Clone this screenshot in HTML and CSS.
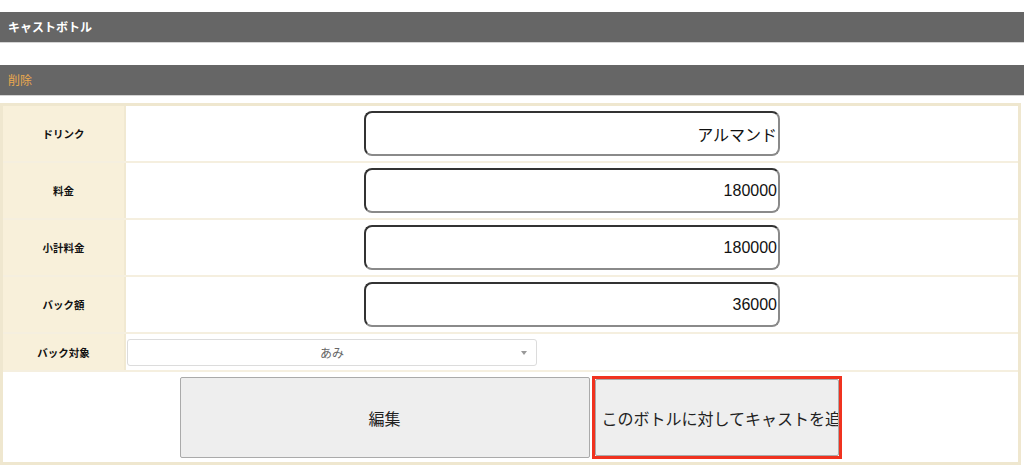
FILE: index.html
```html
<!DOCTYPE html>
<html lang="ja">
<head>
<meta charset="utf-8">
<title>キャストボトル</title>
<link rel="stylesheet" href="styles.css">
</head>
<body>
<div class="bar bar-title">キャストボトル</div>
<div class="bar bar-delete">削除</div>
<div class="form-table">
  <div class="row">
    <div class="label">ドリンク</div>
    <div class="value center"><div class="field">アルマンド</div></div>
  </div>
  <div class="row">
    <div class="label">料金</div>
    <div class="value center"><div class="field">180000</div></div>
  </div>
  <div class="row">
    <div class="label">小計料金</div>
    <div class="value center"><div class="field">180000</div></div>
  </div>
  <div class="row">
    <div class="label">バック額</div>
    <div class="value center"><div class="field">36000</div></div>
  </div>
  <div class="row row-select">
    <div class="label">バック対象</div>
    <div class="value">
      <div class="select"><span class="select-text">あみ</span><span class="caret"></span></div>
    </div>
  </div>
  <div class="row row-buttons">
    <div class="buttons">
      <div class="btn btn-edit">編集</div>
      <div class="highlight"><div class="btn btn-add">このボトルに対してキャストを追加</div></div>
    </div>
  </div>
</div>
</body>
</html>
```

FILE: styles.css
```css
html, body {
  margin: 0;
  padding: 0;
  background: #ffffff;
  font-family: "Liberation Sans", "Noto Sans CJK JP", sans-serif;
}

.bar {
  height: 30px;
  line-height: 30px;
  background: #666666;
  border-bottom: 1px solid #d4d4d4;
  padding-left: 8px;
  font-size: 12px;
  font-family: "Noto Sans CJK JP", sans-serif;
}

.bar-title {
  margin-top: 12px;
  color: #ffffff;
  font-weight: bold;
}

.bar-delete {
  margin-top: 22px;
  color: #eba94e;
}

.form-table {
  margin-top: 7px;
  width: 1015px;
  border: 3px solid #efe7cf;
}

.row {
  display: grid;
  grid-template-columns: 123px 1fr;
  height: 55px;
  border-bottom: 2px solid #f5efdf;
}

.row-select {
  height: 36px;
}

.row-buttons {
  display: block;
  height: 90px;
  border-bottom: none;
}

.label {
  background: #f8f0da;
  border-right: 2px solid #f1e9d2;
  display: flex;
  align-items: center;
  justify-content: center;
  font-family: "Noto Sans CJK JP", sans-serif;
  font-weight: bold;
  font-size: 10.5px;
  color: #111111;
}

.value {
  display: flex;
  align-items: center;
}

.value.center {
  justify-content: center;
}

.field {
  box-sizing: border-box;
  width: 416px;
  height: 45px;
  border: 2px solid;
  border-color: #333333 #8a8a8a #8a8a8a #333333;
  border-radius: 8px;
  display: flex;
  align-items: center;
  justify-content: flex-end;
  padding-right: 1px;
  font-size: 16px;
  color: #111111;
}

.select {
  box-sizing: border-box;
  width: 410px;
  height: 27px;
  margin-left: 1px;
  border: 1px solid #dcdcdc;
  border-radius: 3px;
  display: flex;
  align-items: center;
  justify-content: center;
  position: relative;
  font-family: "Noto Sans CJK JP", sans-serif;
  font-size: 12px;
  color: #666666;
}

.caret {
  position: absolute;
  right: 9px;
  top: 11px;
  width: 0;
  height: 0;
  border-left: 3px solid transparent;
  border-right: 3px solid transparent;
  border-top: 4px solid #999999;
}

.buttons {
  display: flex;
  justify-content: center;
  align-items: flex-start;
  gap: 2px;
  padding-top: 4px;
}

.btn {
  box-sizing: border-box;
  background: #eeeeee;
  border: 1px solid #aaaaaa;
  border-radius: 2px;
  display: flex;
  align-items: center;
  font-family: "Noto Sans CJK JP", sans-serif;
  font-size: 16px;
  color: #222222;
  white-space: nowrap;
  overflow: hidden;
}

.btn-edit {
  width: 410px;
  height: 81px;
  margin-top: 1px;
  justify-content: center;
}

.highlight {
  border: 3px solid #f0321f;
}

.btn-add {
  width: 244px;
  height: 77px;
  padding-left: 6px;
  justify-content: flex-start;
}
```
